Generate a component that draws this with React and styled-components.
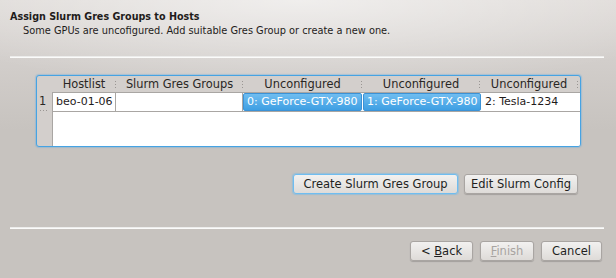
import React from 'react'
import styled, { createGlobalStyle } from 'styled-components'

const GlobalStyle = createGlobalStyle`
  html, body {
    margin: 0;
    padding: 0;
  }
  body {
    width: 616px;
    height: 278px;
    overflow: hidden;
    background: #c7c3bf;
    font-family: 'DejaVu Sans', 'Noto Sans', sans-serif;
    color: #1f1c1b;
  }
`

const columns = [
  { title: 'Hostlist', width: 64 },
  { title: 'Slurm Gres Groups', width: 127 },
  { title: 'Unconfigured', width: 119 },
  { title: 'Unconfigured', width: 118 },
  { title: 'Unconfigured', width: 98 },
]

const row = [
  { text: 'beo-01-06' },
  { text: '' },
  { text: '0: GeForce-GTX-980', selected: true },
  { text: '1: GeForce-GTX-980', selected: true },
  { text: '2: Tesla-1234' },
]

const Page = styled.div`
  display: flex;
  flex-direction: column;
  height: 278px;
  background:
    radial-gradient(ellipse 420px 90px at 300px 0px, rgba(255, 255, 255, 0.55), rgba(255, 255, 255, 0) 100%),
    linear-gradient(#dedad7 0px, #d2cecb 60px, #c7c3bf 130px);
`

const Header = styled.div`
  height: 46px;
  padding: 10px 0 0 10px;
`

const Title = styled.div`
  font-size: 9.6px;
  font-weight: bold;
  line-height: 14px;
`

const Subtitle = styled.div`
  font-size: 9.8px;
  line-height: 14px;
  padding-left: 13px;
`

const Separator = styled.div`
  margin: 0 12px 0 10px;
  height: 1px;
  border-top: 1px solid rgba(0, 0, 0, 0.06);
  background: #fbfbfa;
`

const Content = styled.div`
  padding: 17px 0 0 36px;
`

const Frame = styled.div`
  width: 545px;
  height: 72px;
  box-sizing: border-box;
  border: 1px solid #46a3e3;
  border-radius: 3px;
  box-shadow: 0 0 1px 1px rgba(90, 170, 230, 0.35);
  background: #d3cfcc;
  display: flex;
  flex-direction: column;
  overflow: hidden;
  font-size: 11.4px;
`

const HeaderRow = styled.div`
  display: flex;
  height: 16px;
  flex-shrink: 0;
`

const Corner = styled.div`
  width: 15px;
`

const HeaderCell = styled.div`
  position: relative;
  width: ${p => p.$w}px;
  line-height: 16px;
  text-align: center;
  color: #2a2725;

  &::after {
    content: '';
    position: absolute;
    right: 0;
    top: 5px;
    width: 1px;
    height: 1px;
    background: #9a9693;
    box-shadow: 0 3px 0 #9a9693, 0 6px 0 #9a9693;
  }
`

const Body = styled.div`
  display: flex;
  flex: 1;
`

const RowHeader = styled.div`
  width: 15px;
  flex-shrink: 0;
`

const RowNumber = styled.div`
  position: relative;
  height: 19px;
  line-height: 19px;
  padding-left: 2px;
  color: #2a2725;

  &::after {
    content: '';
    position: absolute;
    left: 3px;
    bottom: 0;
    width: 1px;
    height: 1px;
    background: #9a9693;
    box-shadow: 3px 0 0 #9a9693, 6px 0 0 #9a9693;
  }
`

const Cells = styled.div`
  flex: 1;
  background: #fff;
  border-left: 1px solid #a9a6a3;
  border-top: 1px solid #a9a6a3;
`

const DataRow = styled.div`
  display: flex;
  height: 18px;
  border-bottom: 1px solid #a9a6a3;
  font-size: 11px;
`

const Cell = styled.div`
  box-sizing: border-box;
  width: ${p => p.$w}px;
  padding-left: 3px;
  line-height: 18px;
  white-space: nowrap;
  overflow: hidden;
  border-right: 1px solid ${p => (p.$last ? 'transparent' : '#a9a6a3')};
  color: ${p => (p.$selected ? '#fff' : '#1f1c1b')};
  ${p => p.$selected && `
    border: 1px solid #3b92d6;
    border-radius: 2px;
    margin-right: 1px;
    line-height: 16px;
    background: linear-gradient(#70bdf0, #3e9fe3);
  `}
`

const ActionBar = styled.div`
  display: flex;
  justify-content: flex-end;
  gap: 6px;
  padding: 27px 38px 0 0;
  height: 20px;
`

const Button = styled.button`
  box-sizing: border-box;
  height: 20px;
  width: ${p => p.$w}px;
  padding: 0;
  white-space: nowrap;
  font-family: 'DejaVu Sans', 'Noto Sans', sans-serif;
  font-size: 11.5px;
  color: ${p => (p.disabled ? '#a8a4a1' : '#221f1e')};
  background: linear-gradient(#f2f1f0, #dedbd8);
  border: 1px solid ${p => (p.$focus ? '#6fbdf0' : '#a9a5a2')};
  border-radius: 3px;
  box-shadow: ${p => (p.$focus ? '0 0 1px 1px rgba(110, 185, 235, 0.5)' : '0 1px 1px rgba(0, 0, 0, 0.18)')};

  u {
    text-decoration: underline;
    text-underline-offset: 1px;
  }
`

const BottomSeparator = styled(Separator)`
  margin-top: 33px;
`

const Footer = styled.div`
  display: flex;
  justify-content: flex-end;
  gap: 7px;
  padding: 12px 14px 0 0;
`

export default function App() {
  return (
    <>
      <GlobalStyle />
      <Page>
        <Header>
          <Title>Assign Slurm Gres Groups to Hosts</Title>
          <Subtitle>Some GPUs are uncofigured. Add suitable Gres Group or create a new one.</Subtitle>
        </Header>
        <Separator />
        <Content>
          <Frame>
            <HeaderRow>
              <Corner />
              {columns.map((c, i) => (
                <HeaderCell key={i} $w={c.width}>{c.title}</HeaderCell>
              ))}
            </HeaderRow>
            <Body>
              <RowHeader>
                <RowNumber>1</RowNumber>
              </RowHeader>
              <Cells>
                <DataRow>
                  {row.map((cell, i) => (
                    <Cell
                      key={i}
                      $w={columns[i].width - (i === 0 ? 1 : 0)}
                      $selected={cell.selected}
                      $last={i === row.length - 1}
                    >
                      {cell.text}
                    </Cell>
                  ))}
                </DataRow>
              </Cells>
            </Body>
          </Frame>
        </Content>
        <ActionBar>
          <Button $focus $w={165}>Create Slurm Gres Group</Button>
          <Button $w={114}>Edit Slurm Config</Button>
        </ActionBar>
        <BottomSeparator />
        <Footer>
          <Button $w={63}>&lt; <u>B</u>ack</Button>
          <Button $w={54} disabled><u>F</u>inish</Button>
          <Button $w={61}>Cancel</Button>
        </Footer>
      </Page>
    </>
  )
}
